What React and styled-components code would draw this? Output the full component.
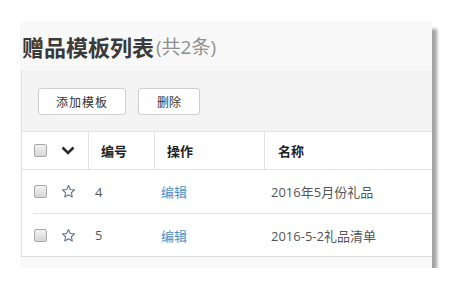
import React from "react";
import styled, { createGlobalStyle } from "styled-components";

const GlobalStyle = createGlobalStyle`
  html, body {
    margin: 0;
    padding: 0;
    background: #ffffff;
  }
  body {
    font-family: "Open Sans", "Noto Sans CJK SC", sans-serif;
  }
`;

const Page = styled.div`
  padding: 22px 0 0 20px;
`;

const Panel = styled.div`
  width: 412px;
  height: 246px;
  background: #f8f8f8;
  box-shadow: 5px 7px 3px rgba(0, 0, 0, 0.36);
  display: flex;
  flex-direction: column;
`;

const Title = styled.h1`
  margin: 0;
  height: 48px;
  display: flex;
  align-items: center;
  padding-left: 2px;
  font-family: "Liberation Serif", "Noto Sans CJK SC", serif;
  font-size: 22px;
  font-weight: bold;
  color: #3a3a3a;

  small {
    font-family: "Open Sans", "Noto Sans CJK SC", sans-serif;
    font-size: 19px;
    font-weight: normal;
    color: #8f8f8f;
    margin-left: 2px;
  }
`;

const Content = styled.div`
  margin-left: 1px;
  border-left: 1px solid #e2e2e2;
  background: #f4f4f4;
`;

const Toolbar = styled.div`
  height: 61px;
  box-sizing: border-box;
  padding: 18px 16px 0;
  display: flex;
  gap: 12px;
  align-items: flex-start;
`;

const Button = styled.button`
  height: 27px;
  padding: 0 ${(p) => (p.$spaced ? 17 : 18)}px;
  background: #ffffff;
  border: 1px solid #cfcfcf;
  border-radius: 3px;
  font-family: "Noto Sans CJK SC", sans-serif;
  font-size: 12px;
  letter-spacing: ${(p) => (p.$spaced ? "1px" : "0")};
  color: #333;
  cursor: pointer;
`;

const Table = styled.div`
  background: #ffffff;
  border-top: 1px solid #e2e2e2;
  border-bottom: 1px solid #dcdcdc;
`;

const HeadRow = styled.div`
  display: grid;
  grid-template-columns: 67px 66px 110px 1fr;
  height: 38px;
  border-bottom: 1px solid #e2e2e2;
  box-sizing: border-box;
`;

const HeadCell = styled.div`
  display: flex;
  align-items: center;
  padding-left: ${(p) => p.$pad}px;
  border-right: ${(p) => (p.$last ? "none" : "1px solid #e2e2e2")};
  font-family: "Noto Sans CJK SC", sans-serif;
  font-size: 13px;
  font-weight: bold;
  color: #222;
  gap: 14px;
`;

const BodyRow = styled.div`
  display: grid;
  grid-template-columns: 56px 66px 110px 1fr;
  margin-left: 11px;
  height: 43px;
  box-sizing: border-box;
  border-top: ${(p) => (p.$first ? "none" : "1px solid #e2e2e2")};
`;

const Cell = styled.div`
  display: flex;
  align-items: center;
  padding-left: ${(p) => p.$pad}px;
  font-size: 13px;
  color: #555;
  gap: 14px;
`;

const Link = styled.a`
  color: #4b8fc6;
  text-decoration: none;
  font-family: "Noto Sans CJK SC", sans-serif;
`;

const Check = styled.span`
  width: 11px;
  height: 11px;
  border: 1px solid #a9a9a9;
  border-radius: 2px;
  background: linear-gradient(#f2f2f2, #d6d6d6);
  flex: none;
`;

const Footer = styled.div`
  flex: 1;
`;

const Chevron = () => (
  <svg width="14" height="9" viewBox="0 0 14 9">
    <path d="M1.5 1.5 L7 7 L12.5 1.5" fill="none" stroke="#2a2a2a" strokeWidth="2.6" />
  </svg>
);

const Star = () => (
  <svg width="15" height="15" viewBox="0 0 24 24">
    <path
      d="M12 2.5l2.9 6.2 6.7.7-5 4.6 1.4 6.7L12 17.3l-6 3.4 1.4-6.7-5-4.6 6.7-.7z"
      fill="none"
      stroke="#5d7190"
      strokeWidth="1.7"
      strokeLinejoin="round"
    />
  </svg>
);

const rows = [
  { id: 4, name: "2016年5月份礼品" },
  { id: 5, name: "2016-5-2礼品清单" },
];

const App = () => (
  <>
    <GlobalStyle />
    <Page>
      <Panel>
        <Title>
          赠品模板列表<small>(共2条)</small>
        </Title>
        <Content>
          <Toolbar>
            <Button $spaced>添加模板</Button>
            <Button>删除</Button>
          </Toolbar>
          <Table>
            <HeadRow>
              <HeadCell $pad={12}>
                <Check />
                <Chevron />
              </HeadCell>
              <HeadCell $pad={12}>编号</HeadCell>
              <HeadCell $pad={12}>操作</HeadCell>
              <HeadCell $pad={13} $last>
                名称
              </HeadCell>
            </HeadRow>
            {rows.map((r, i) => (
              <BodyRow key={r.id} $first={i === 0}>
                <Cell $pad={1}>
                  <Check />
                  <Star />
                </Cell>
                <Cell $pad={6}>{r.id}</Cell>
                <Cell $pad={6}>
                  <Link href="#">编辑</Link>
                </Cell>
                <Cell $pad={6}>{r.name}</Cell>
              </BodyRow>
            ))}
          </Table>
        </Content>
        <Footer />
      </Panel>
    </Page>
  </>
);

export default App;
